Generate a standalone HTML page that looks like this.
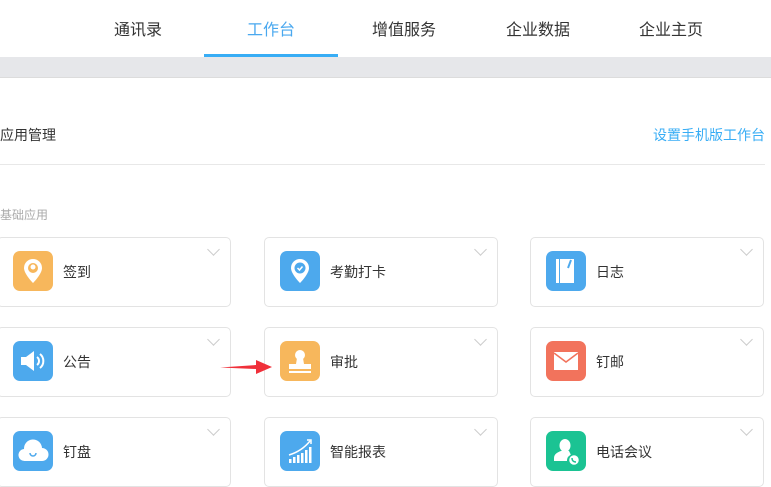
<!DOCTYPE html>
<html><head><meta charset="utf-8"><style>
*{margin:0;padding:0;box-sizing:border-box}
body{width:771px;height:477px;overflow:hidden;background:#fff;font-family:"Liberation Sans","Noto Sans CJK SC",sans-serif;position:relative;color:#333}
.nav{position:absolute;top:0;left:0;width:771px;height:57px;background:#fff}
.nav span{position:absolute;top:16px;font-size:16px;color:#333;transform:translateX(-50%)}
.ul{position:absolute;left:204px;top:54px;width:134px;height:3px;background:#38adf5}
.band{position:absolute;top:57px;left:0;width:771px;height:21px;background:#e6e7ea;border-bottom:1px solid #dcdcdc}
.t{position:absolute;top:125px;left:0;font-size:14px;color:#333}
.lk{position:absolute;top:125px;right:6px;font-size:14px;color:#38adf5}
.hr{position:absolute;top:164px;left:0;width:765px;height:1px;background:#e8e8e8}
.sub{position:absolute;top:206px;left:0;font-size:12px;color:#aaa}
.card{position:absolute;width:234px;height:70px;border:1px solid #e3e3e3;border-radius:5px;background:#fff}
.card .ic{position:absolute;left:15px;top:13px;width:40px;height:40px;border-radius:7px}
.card .n{position:absolute;left:65px;top:24px;font-size:14px;color:#333}
.card .ch{position:absolute;right:12px;top:7px;width:9px;height:9px;border-right:1.5px solid #ccc;border-bottom:1.5px solid #ccc;transform:rotate(45deg)}
</style></head><body>
<div class="nav">
<span style="left:138px">通讯录</span>
<span style="left:271px;color:#4aa8ef">工作台</span>
<span style="left:404px">增值服务</span>
<span style="left:538px">企业数据</span>
<span style="left:671px">企业主页</span>
</div>
<div class="ul"></div>
<div class="band"></div>
<div class="t">应用管理</div>
<div class="lk">设置手机版工作台</div>
<div class="hr"></div>
<div class="sub">基础应用</div>

<div class="card" style="left:-3px;top:237px"><div class="ic" style="background:#f7b75c"><svg width="40" height="40"><path d="M20 8a9 9 0 0 1 9 9c0 6-9 15-9 15s-9-9-9-15a9 9 0 0 1 9-9z" fill="#fff"/><circle cx="20" cy="17" r="5" fill="#f7b75c"/><circle cx="20" cy="16" r="2.5" fill="#fff"/></svg></div><div class="n">签到</div><div class="ch"></div></div>
<div class="card" style="left:264px;top:237px"><div class="ic" style="background:#4da9ed"><svg width="40" height="40"><path d="M20 8a9 9 0 0 1 9 9c0 6-9 15-9 15s-9-9-9-15a9 9 0 0 1 9-9z" fill="#fff"/><circle cx="20" cy="17" r="5.5" fill="#4da9ed"/><path d="M17.5 17l2 2 3-3.5" stroke="#fff" stroke-width="1.5" fill="none"/></svg></div><div class="n">考勤打卡</div><div class="ch"></div></div>
<div class="card" style="left:530px;top:237px"><div class="ic" style="background:#4da9ed"><svg width="40" height="40"><rect x="10" y="8" width="3" height="24" fill="#fff"/><path d="M14 8h14v24H14z" fill="#fff"/><path d="M25 9l-3 8" stroke="#4da9ed" stroke-width="2"/></svg></div><div class="n">日志</div><div class="ch"></div></div>

<div class="card" style="left:-3px;top:327px"><div class="ic" style="background:#4da9ed"><svg width="40" height="40"><path d="M8 16h5l8-6v20l-8-6H8z" fill="#fff"/><path d="M24 16a5 5 0 0 1 0 8M27 13a9 9 0 0 1 0 14" stroke="#fff" stroke-width="2" fill="none"/></svg></div><div class="n">公告</div><div class="ch"></div></div>
<div class="card" style="left:264px;top:327px"><div class="ic" style="background:#f7b75c"><svg width="40" height="40"><circle cx="20" cy="14" r="5" fill="#fff"/><path d="M17 17h6l1 6h7v5H9v-5h7z" fill="#fff"/><rect x="9" y="30" width="22" height="2" fill="#fff"/></svg></div><div class="n">审批</div><div class="ch"></div></div>
<div class="card" style="left:530px;top:327px"><div class="ic" style="background:#f2735c"><svg width="40" height="40"><rect x="8" y="11" width="24" height="18" fill="#fff"/><path d="M8 12l12 9 12-9" stroke="#f2735c" stroke-width="1.5" fill="none"/></svg></div><div class="n">钉邮</div><div class="ch"></div></div>

<div class="card" style="left:-3px;top:417px"><div class="ic" style="background:#4da9ed"><svg width="40" height="40"><path d="M12 30a6 6 0 0 1-1-12 9 9 0 0 1 18-1 6.5 6.5 0 0 1 0 13z" fill="#fff"/><path d="M17 22a3 3 0 0 0 6 0" stroke="#4da9ed" stroke-width="1.5" fill="none"/></svg></div><div class="n">钉盘</div><div class="ch"></div></div>
<div class="card" style="left:264px;top:417px"><div class="ic" style="background:#4da9ed"><svg width="40" height="40"><g fill="#fff"><rect x="9" y="28" width="2.5" height="4"/><rect x="13" y="26" width="2.5" height="6"/><rect x="17" y="24" width="2.5" height="8"/><rect x="21" y="22" width="2.5" height="10"/><rect x="25" y="19" width="2.5" height="13"/><rect x="29" y="16" width="2.5" height="16"/></g><path d="M9 24Q22 20 30 10" stroke="#fff" stroke-width="1.5" fill="none"/><path d="M27 9h4v4" stroke="#fff" stroke-width="1.5" fill="none"/></svg></div><div class="n">智能报表</div><div class="ch"></div></div>
<div class="card" style="left:530px;top:417px"><div class="ic" style="background:#1bc393"><svg width="40" height="40"><path d="M19 8a5.5 6.5 0 0 1 0 13a5.5 6.5 0 0 1 0-13z" fill="#fff"/><path d="M15 20h8l2 4c-3 1-4 3-4 6H8v-3c0-4 4-6 7-7z" fill="#fff"/><circle cx="28" cy="29" r="5.5" fill="#fff" stroke="#1bc393" stroke-width="1.5"/><path d="M26 27c0 2 1 4 4 4" stroke="#1bc393" stroke-width="1.5" fill="none"/></svg></div><div class="n">电话会议</div><div class="ch"></div></div>

<svg style="position:absolute;left:218px;top:358px" width="56" height="18"><path d="M2 9.5L38 7V2L54 9 38 16v-5z" fill="#f0303a"/></svg>
</body></html>
